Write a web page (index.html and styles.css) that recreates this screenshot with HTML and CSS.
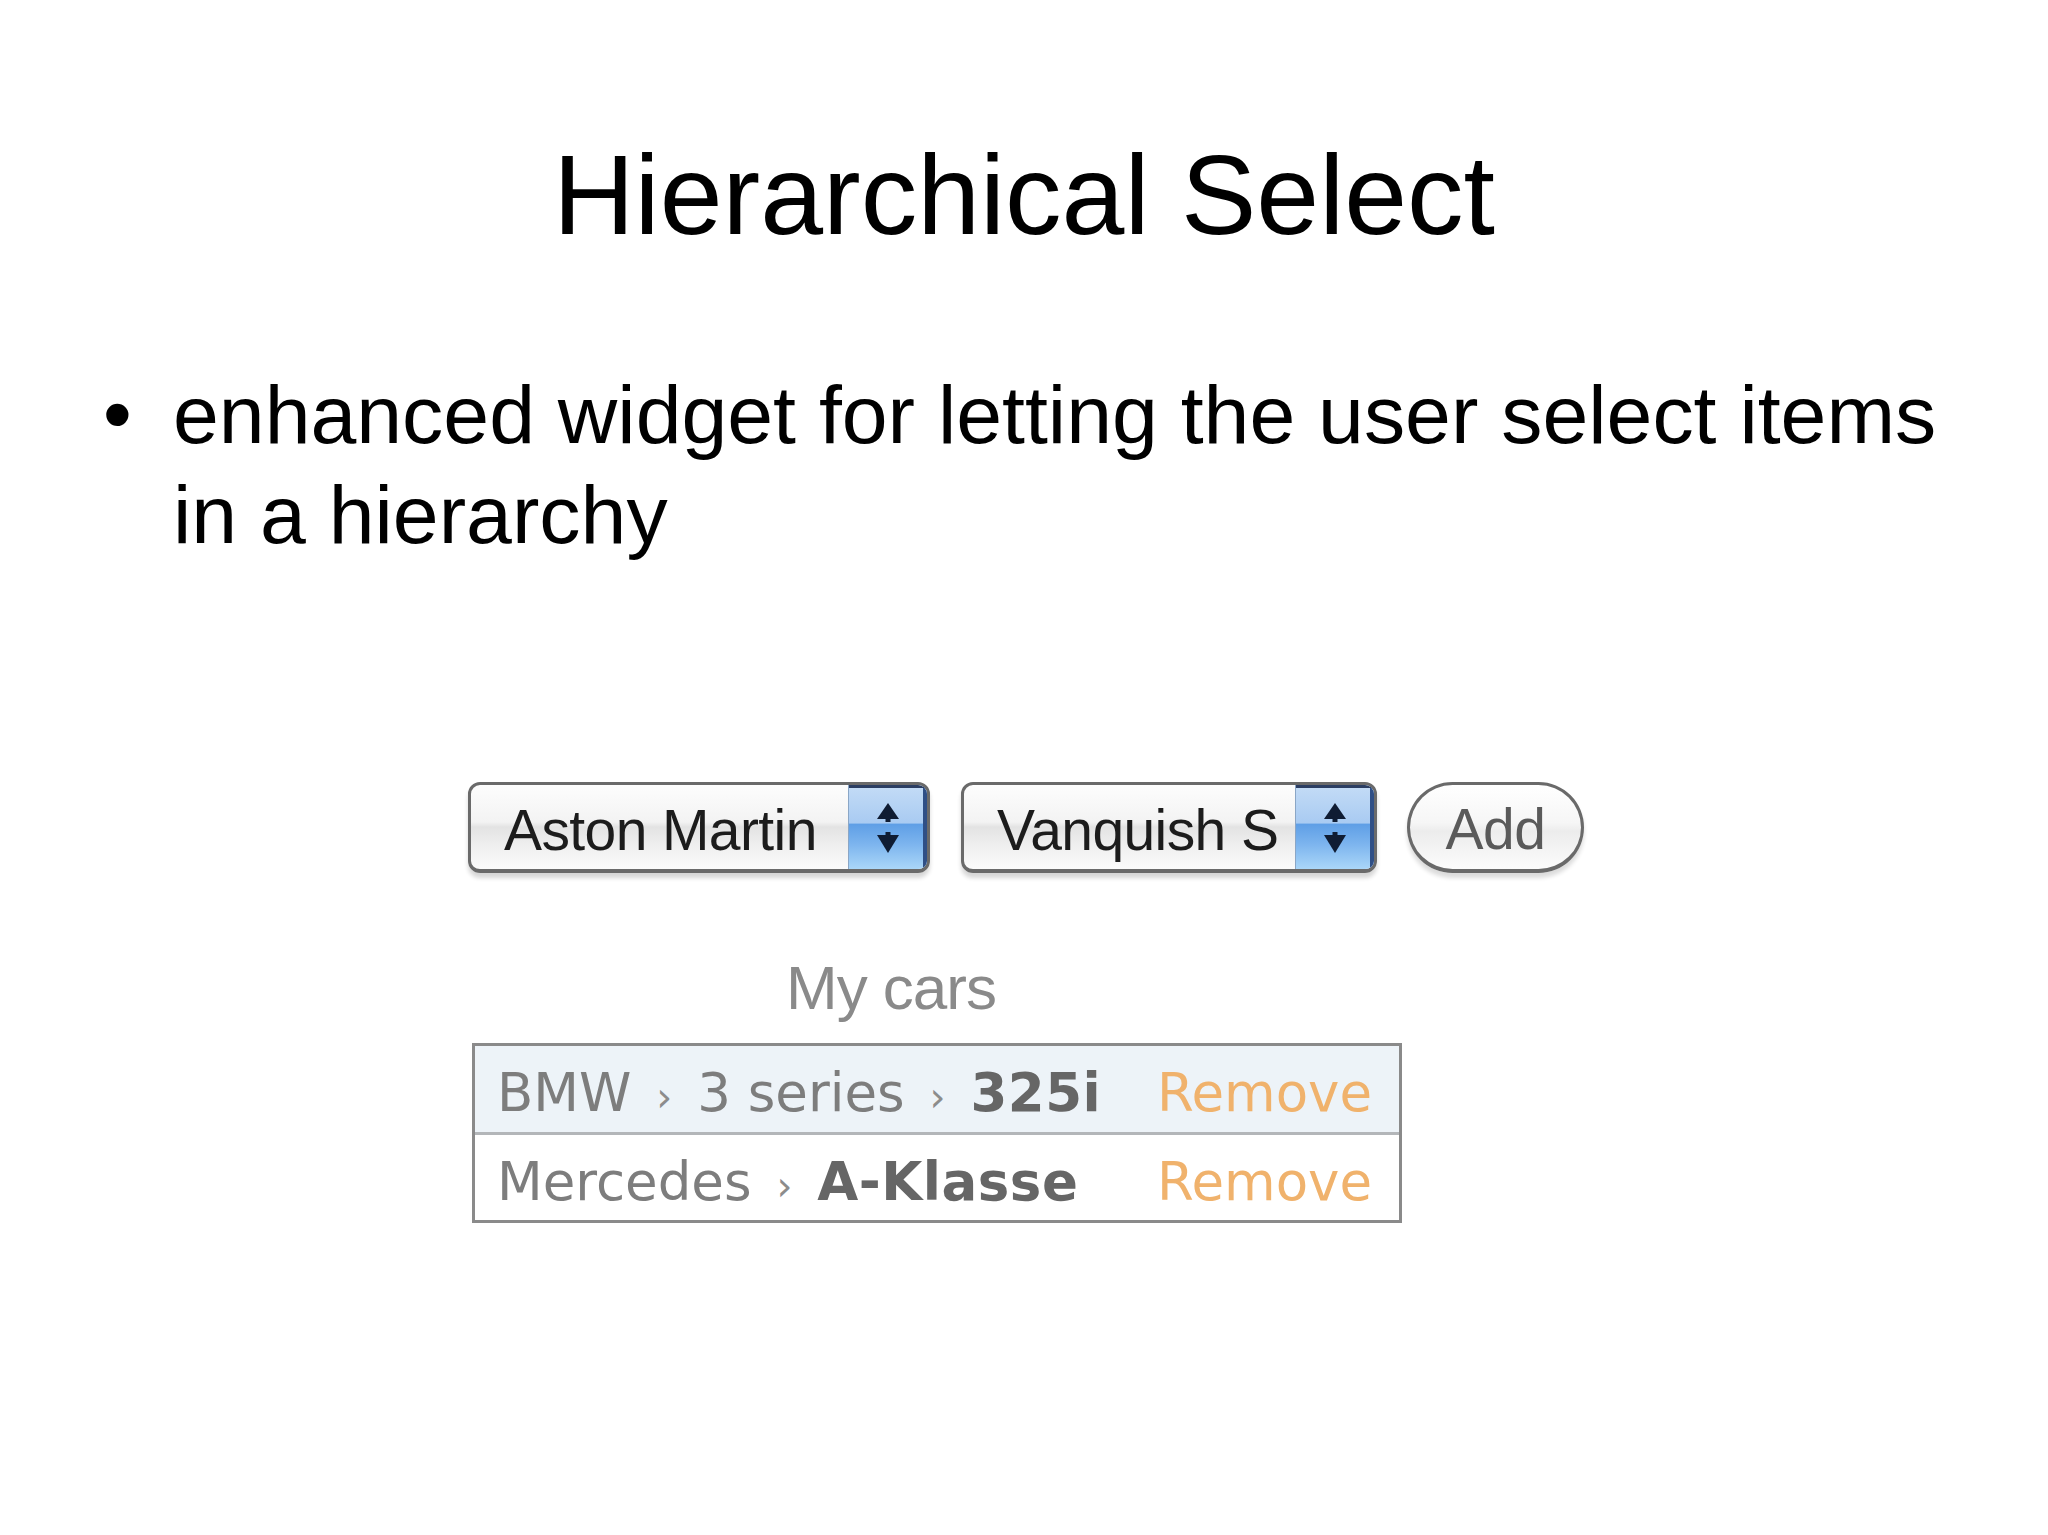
FILE: index.html
```html
<!DOCTYPE html>
<html>
<head>
<meta charset="utf-8">
<title>Hierarchical Select</title>
<link rel="stylesheet" href="styles.css">
</head>
<body>
<div class="slide">
  <h1 class="title">Hierarchical Select</h1>
  <div class="bullet">
    <span class="dot">&#8226;</span>
    <p class="bullet-text">enhanced widget for letting the user select items in a hierarchy</p>
  </div>
  <div class="widget">
    <div class="controls">
      <div class="select select-make">
        <span class="select-label">Aston Martin</span>
        <div class="stepper">
          <svg width="30" height="60" viewBox="0 0 30 60">
            <path d="M15 6 L26 22 L4 22 Z" fill="#0f1c33"/>
            <rect x="12.5" y="21" width="5" height="4" fill="#0f1c33"/>
            <path d="M4 38 L26 38 L15 56 Z" fill="#0f1c33"/>
            <rect x="12.5" y="35" width="5" height="4" fill="#0f1c33"/>
          </svg>
        </div>
      </div>
      <div class="select select-model">
        <span class="select-label">Vanquish S</span>
        <div class="stepper">
          <svg width="30" height="60" viewBox="0 0 30 60">
            <path d="M15 6 L26 22 L4 22 Z" fill="#0f1c33"/>
            <rect x="12.5" y="21" width="5" height="4" fill="#0f1c33"/>
            <path d="M4 38 L26 38 L15 56 Z" fill="#0f1c33"/>
            <rect x="12.5" y="35" width="5" height="4" fill="#0f1c33"/>
          </svg>
        </div>
      </div>
      <div class="add-button">Add</div>
    </div>
    <div class="caption">My cars</div>
    <div class="cars">
      <div class="car car-alt">
        <span class="path">BMW <span class="sep">&#8250;</span> 3 series <span class="sep">&#8250;</span> <b>325i</b></span>
        <span class="remove">Remove</span>
      </div>
      <div class="car">
        <span class="path">Mercedes <span class="sep">&#8250;</span> <b>A-Klasse</b></span>
        <span class="remove">Remove</span>
      </div>
    </div>
  </div>
</div>
</body>
</html>
```

FILE: styles.css
```css
html, body {
  margin: 0;
  padding: 0;
  background: #ffffff;
}

.slide {
  width: 2048px;
  height: 1535px;
  overflow: hidden;
  font-family: "Liberation Sans", Arial, sans-serif;
  color: #000;
}

.title {
  margin: 0;
  padding-top: 128px;
  font-size: 113px;
  font-weight: normal;
  line-height: 135px;
  text-align: center;
}

.bullet {
  display: flex;
  margin-top: 101px;
  padding-left: 103px;
}

.dot {
  width: 70px;
  flex: none;
  font-size: 82px;
  line-height: 100px;
}

.bullet-text {
  margin: 0;
  width: 1810px;
  font-size: 82.4px;
  line-height: 100px;
}

.widget {
  margin-top: 218px;
  margin-left: 468px;
}

.controls {
  display: flex;
  align-items: flex-start;
}

.select {
  box-sizing: border-box;
  height: 91px;
  display: flex;
  align-items: stretch;
  border: 3px solid #6a6a6a;
  border-bottom-width: 4px;
  border-radius: 12px;
  background: linear-gradient(#fdfdfd 0%, #f3f3f3 44%, #e3e3e3 50%, #eeeeee 70%, #fbfbfb 100%);
  box-shadow: 0 5px 4px rgba(0, 0, 0, 0.16);
  overflow: hidden;
}

.select-make {
  width: 462px;
}

.select-model {
  width: 416px;
  margin-left: 31px;
}

.select-label {
  flex: 1;
  padding-left: 33px;
  padding-top: 3px;
  font-size: 57px;
  line-height: 85px;
  letter-spacing: -0.6px;
  color: #1c1c1c;
  white-space: nowrap;
}

.stepper {
  width: 78px;
  flex: none;
  display: flex;
  align-items: center;
  justify-content: center;
  background: linear-gradient(#c4dcf6 0%, #a9cbf2 45%, #5f9fe6 47%, #7cb4ee 70%, #aad6f8 100%);
  border-left: 1px solid #8aa6c6;
  box-shadow: inset 0 3px 0 #2b3e63, inset -4px 0 0 #2f4f86;
}

.add-button {
  box-sizing: border-box;
  width: 177px;
  height: 91px;
  margin-left: 30px;
  border: 3px solid #6a6a6a;
  border-bottom-width: 4px;
  border-radius: 46px;
  background: linear-gradient(#ffffff 0%, #f6f6f6 45%, #ececec 55%, #fcfcfc 100%);
  box-shadow: 0 5px 4px rgba(0, 0, 0, 0.14);
  font-size: 57px;
  line-height: 84px;
  padding-top: 2px;
  text-align: center;
  letter-spacing: -0.5px;
  color: #5a5a5a;
}

.caption {
  margin-top: 80px;
  margin-left: 318px;
  font-size: 62px;
  line-height: 70px;
  letter-spacing: -1px;
  color: #8a8a8a;
}

.cars {
  box-sizing: border-box;
  width: 930px;
  margin-top: 20px;
  margin-left: 4px;
  border: 3px solid #8a8a8a;
  font-family: "DejaVu Sans", "Liberation Sans", sans-serif;
  font-size: 53px;
}

.car {
  box-sizing: border-box;
  height: 85px;
  display: grid;
  grid-template-columns: 660px auto;
  padding-left: 22px;
  padding-top: 8px;
  line-height: 78px;
  color: #7d7d7d;
  white-space: nowrap;
}

.car-alt {
  height: 89px;
  background: #edf3f8;
  border-bottom: 3px solid #b3b6b9;
}

.car b {
  color: #666666;
  letter-spacing: 0.5px;
}

.sep {
  display: inline-block;
  margin: 0 8px;
  font-size: 40px;
  color: #8c8c8c;
}

.remove {
  color: #f0b26c;
}
```
